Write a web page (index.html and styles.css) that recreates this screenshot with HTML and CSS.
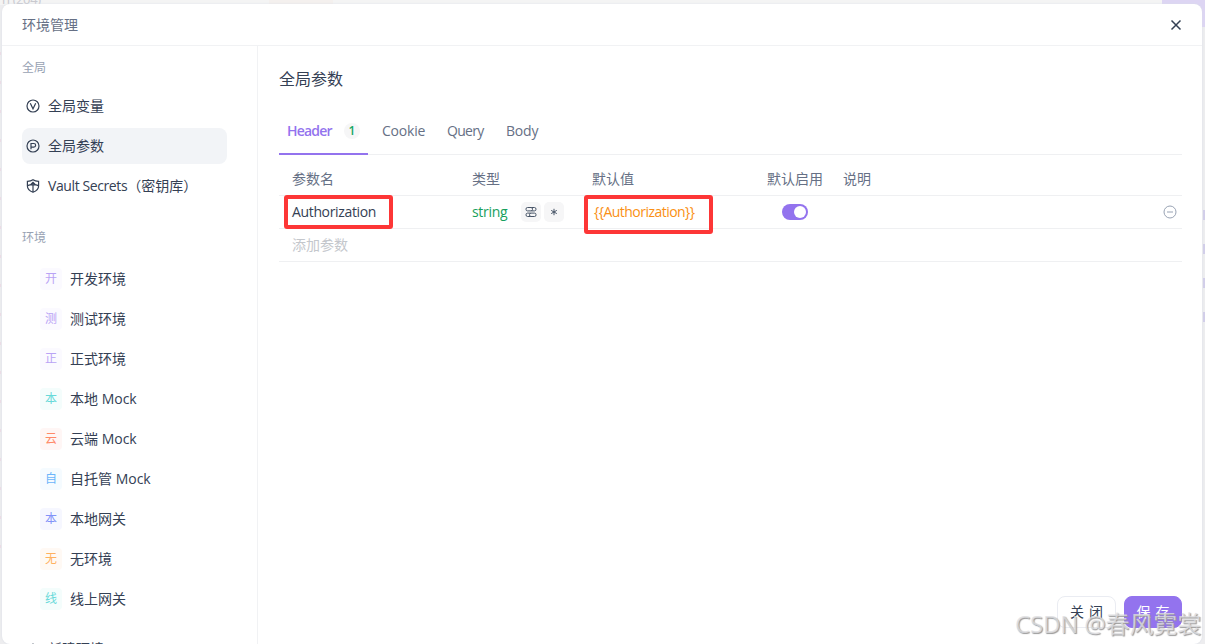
FILE: index.html
```html
<!DOCTYPE html>
<html lang="zh-CN">
<head>
    <meta charset="UTF-8">
    <meta name="viewport" content="width=device-width, initial-scale=1.0">
    <title>环境管理</title>
    <link rel="stylesheet" href="styles.css">
</head>
<body>
    <!-- dimmed page behind the dialog -->
    <div class="backdrop">
        <span class="bg-count">п (204)</span>
        <span class="bg-tab"></span>
        <span class="bg-button"></span>
        <span class="bg-marks bg-marks-left"></span>
        <span class="bg-marks bg-marks-right"></span>
    </div>

    <div class="dialog">
        <div class="dialog-header">
            <span>环境管理</span>
            <svg class="close" viewBox="0 0 12 12"><path d="M1.5 1.5l9 9M10.5 1.5l-9 9"/></svg>
        </div>
        <div class="dialog-body">
            <div class="sidebar">
                <div class="group-title">全局</div>
                <ul class="menu">
                    <li>
                        <svg class="icon" viewBox="0 0 14 14"><circle cx="7" cy="7" r="6"/><path d="M4.300 4.200L7 9.800l2.700-5.600"/></svg>
                        <span>全局变量</span>
                    </li>
                    <li class="active">
                        <svg class="icon" viewBox="0 0 14 14"><circle cx="7" cy="7" r="6"/><path d="M5 10.200V4.500h2.800a1.800 1.800 0 0 1 0 3.700H5"/></svg>
                        <span>全局参数</span>
                    </li>
                    <li>
                        <svg class="icon" viewBox="0 0 14 14"><path d="M7 .8c1.600 1.100 3.500 1.500 5.600 1.600v4.600c0 3-2.100 5-5.600 6.300-3.500-1.300-5.600-3.300-5.600-6.300V2.400C3.500 2.300 5.400 1.900 7 .8zM7 3.600v9.400M1.500 6.600c1.500-.7 3.200-1 5.500-1s4 .3 5.500 1M4.600 5.600L7 3.400l2.400 2.200"/></svg>
                        <span class="latin">Vault Secrets</span><span>（密钥库）</span>
                    </li>
                </ul>
                <div class="group-title env-title">环境</div>
                <ul class="menu env-menu">
                    <li><span class="badge purple">开</span><span>开发环境</span></li>
                    <li><span class="badge purple">测</span><span>测试环境</span></li>
                    <li><span class="badge purple">正</span><span>正式环境</span></li>
                    <li><span class="badge cyan">本</span><span>本地 Mock</span></li>
                    <li><span class="badge red">云</span><span>云端 Mock</span></li>
                    <li><span class="badge blue">自</span><span>自托管 Mock</span></li>
                    <li><span class="badge indigo">本</span><span>本地网关</span></li>
                    <li><span class="badge orange">无</span><span>无环境</span></li>
                    <li><span class="badge cyan">线</span><span>线上网关</span></li>
                </ul>
                <div class="new-env">
                    <svg class="icon" viewBox="0 0 14 14"><path d="M7 1.500v11M1.500 7h11"/></svg>
                    <span>新建环境</span>
                </div>
            </div>

            <div class="main">
                <h2>全局参数</h2>
                <div class="tabs">
                    <div class="tab active"><span>Header</span><span class="count">1</span></div>
                    <div class="tab cookie">Cookie</div>
                    <div class="tab query">Query</div>
                    <div class="tab">Body</div>
                </div>
                <div class="params">
                    <div class="row head">
                        <span>参数名</span>
                        <span>类型</span>
                        <span>默认值</span>
                        <span>默认启用</span>
                        <span>说明</span>
                    </div>
                    <div class="row">
                        <span class="cell name">Authorization<i class="mark mark-name"></i></span>
                        <span class="cell type">
                            <span class="type-name">string</span>
                            <span class="chip"><svg viewBox="0 0 12 12"><rect x="1" y="1.500" width="6.500" height="3.400" rx="1.500"/><path d="M6.500 1.500h3a1.500 1.700 0 0 1 0 3.400h-3"/><path d="M5.500 7.100h-3a1.500 1.700 0 0 0 0 3.400h3"/><rect x="4.500" y="7.100" width="6.500" height="3.400" rx="1.500"/></svg></span>
                            <span class="chip"><svg viewBox="0 0 12 12"><path d="M6 2.800v6.400M3.200 4.400l5.600 3.200M8.800 4.400L3.200 7.600"/></svg></span>
                        </span>
                        <span class="cell value">{{Authorization}}<i class="mark mark-value"></i></span>
                        <span class="cell enabled"><span class="switch"></span></span>
                        <span class="cell"></span>
                        <svg class="remove" viewBox="0 0 14 14"><circle cx="7" cy="7" r="6"/><path d="M4 7h6"/></svg>
                    </div>
                    <div class="row add"><span>添加参数</span></div>
                </div>
                <div class="footer">
                    <button class="btn">关 闭</button>
                    <button class="btn primary">保 存</button>
                </div>
            </div>
        </div>
    </div>
    <div class="watermark">CSDN @春风霓裳</div>
</body>
</html>
```
FILE: styles.css
```css
* {
    box-sizing: border-box;
}
body {
    margin: 0;
    height: 644px;
    padding: 4px 3px 0 2px;
    position: relative;
    overflow: hidden;
    background: #ededef;
    color: #344054;
    font-family: "Open Sans", "Noto Sans CJK SC", sans-serif;
    font-size: 14px;
    line-height: 20px;
}
ul {
    list-style: none;
    margin: 0;
    padding: 0;
}
svg {
    fill: none;
    stroke: currentColor;
    flex: none;
}

/* page behind */
.backdrop {
    position: absolute;
    inset: 0;
    background: linear-gradient(#f4f4f4 0, #f4f4f4 5px, transparent 5px);
}
.bg-count {
    position: absolute;
    left: 2px;
    top: -9px;
    font-size: 13px;
    line-height: 17px;
    color: #c9c9cf;
    letter-spacing: -0.4px;
}
.bg-tab {
    position: absolute;
    left: 269px;
    top: 0;
    width: 64px;
    height: 5px;
    background: #f4f0ee;
}
.bg-button {
    position: absolute;
    right: 0;
    top: 0;
    width: 43px;
    height: 27px;
    background: #ddd5f3;
}
.bg-marks {
    position: absolute;
    width: 1px;
    background: repeating-linear-gradient(#ecdce5 0, #ecdce5 3px, transparent 3px, transparent 29px);
}
.bg-marks-left {
    left: 0;
    top: 52px;
    height: 500px;
}
.bg-marks-right {
    right: 0;
    top: 210px;
    width: 2px;
    height: 112px;
    background: repeating-linear-gradient(#d2cee9 0, #d2cee9 10px, transparent 10px, transparent 34px);
}

.dialog {
    position: relative;
    display: flex;
    flex-direction: column;
    height: 640px;
    background: #fff;
    border-radius: 8px;
    overflow: hidden;
    box-shadow: 0 0 2px #d9dde6;
}
.dialog-header {
    display: flex;
    align-items: center;
    justify-content: space-between;
    flex: none;
    height: 42px;
    padding: 0 20px;
    border-bottom: 1px solid #f1f2f4;
    color: #667085;
}
.close {
    width: 12px;
    height: 12px;
    color: #344054;
    stroke-width: 1.5;
}
.dialog-body {
    display: flex;
    flex: 1;
    min-height: 0;
}

/* sidebar */
.sidebar {
    flex: none;
    width: 256px;
    padding: 12px 30px 0 20px;
    border-right: 1px solid #f1f2f4;
    overflow: hidden;
}
.group-title {
    height: 30px;
    font-size: 12px;
    color: #98a2b3;
}
.menu li {
    display: flex;
    align-items: center;
    height: 36px;
    margin-bottom: 4px;
    padding-left: 4px;
    border-radius: 8px;
    white-space: nowrap;
}
.menu li.active {
    background: #f2f4f7;
}
.icon {
    width: 14px;
    height: 14px;
    margin-right: 8px;
    stroke-width: 1.2;
}
.latin {
    letter-spacing: -0.4px;
}
.env-title {
    margin-top: 24px;
    height: 33px;
}
.env-menu li {
    padding-left: 18px;
}
.badge {
    width: 22px;
    height: 22px;
    margin-right: 8px;
    border-radius: 4px;
    font-size: 12px;
    line-height: 22px;
    text-align: center;
}
.purple { color: #b9a3f5; background: #fbfaff; }
.cyan { color: #67d9d9; background: #f4fdfc; }
.red { color: #ff8a68; background: #fff6f5; }
.blue { color: #6cb5fa; background: #f5fbff; }
.indigo { color: #8292f8; background: #f6f7ff; }
.orange { color: #ffb15f; background: #fff9f4; }
.new-env {
    display: flex;
    align-items: center;
    height: 36px;
    margin-top: 14px;
    padding-left: 4px;
}

/* content */
.main {
    flex: 1;
    display: flex;
    flex-direction: column;
    padding: 21px 20px 16px 21px;
}
h2 {
    margin: 0;
    font-size: 16px;
    font-weight: normal;
    line-height: 24px;
}
.tabs {
    display: flex;
    height: 48px;
    margin-top: 16px;
    border-bottom: 1px solid #eff0f2;
    color: #667085;
}
.tab {
    height: 48px;
    padding-top: 14px;
    letter-spacing: -0.2px;
}
.tab.active {
    display: flex;
    width: 89px;
    padding-left: 8px;
    margin-right: 14px;
    border-bottom: 2px solid #9373ee;
    color: #9373ee;
    font-weight: 600;
    letter-spacing: -0.8px;
}
.count {
    width: 16px;
    height: 16px;
    margin: 2px 8px 0 auto;
    border-radius: 8px;
    background: #f6f6f7;
    color: #17a765;
    font-size: 12px;
    line-height: 16px;
    text-align: center;
    letter-spacing: 0;
}
.cookie {
    width: 65px;
}
.tab.query {
    width: 59px;
    letter-spacing: -0.7px;
}
.row {
    display: grid;
    grid-template-columns: 180px 120px 175px 76px 1fr auto;
    align-items: center;
    height: 33px;
    padding: 0 5px 0 13px;
    border-bottom: 1px solid #eff0f2;
}
.row.head {
    height: 41px;
    padding-top: 8px;
    color: #667085;
}
.row.add {
    color: #c4c7cc;
}
.cell {
    position: relative;
}
.name {
    letter-spacing: -0.35px;
}
.type {
    display: flex;
    align-items: center;
}
.type-name {
    width: 49px;
    color: #17a05d;
    letter-spacing: -0.3px;
}
.chip {
    display: flex;
    align-items: center;
    justify-content: center;
    width: 20px;
    height: 20px;
    margin-right: 3px;
    border-radius: 5px;
    background: #f6f6f7;
    color: #475467;
}
.chip svg {
    width: 12px;
    height: 12px;
}
.value {
    padding-left: 2px;
    color: #fa9014;
    letter-spacing: -0.53px;
}
.enabled {
    padding-left: 15px;
}
.switch {
    display: flex;
    justify-content: flex-end;
    width: 26px;
    height: 16px;
    padding: 2px;
    border-radius: 8px;
    background: #9373ee;
}
.switch::after {
    content: "";
    width: 12px;
    height: 12px;
    border-radius: 50%;
    background: #fff;
}
.remove {
    width: 14px;
    height: 14px;
    color: #98a2b3;
}
/* highlight frames over the cells */
.mark {
    position: absolute;
    left: -8px;
    top: -7px;
    border: 4px solid #fd3636;
    border-radius: 3px;
}
.mark-name {
    width: 109px;
    height: 34px;
}
.mark-value {
    width: 129px;
    height: 39px;
}
.footer {
    display: flex;
    justify-content: flex-end;
    gap: 8px;
    margin-top: auto;
}
.btn {
    width: 59px;
    height: 32px;
    padding: 0;
    border: 1px solid #eaecf2;
    border-radius: 8px;
    background: #fff;
    color: #344054;
    font: inherit;
    word-spacing: 1.5px;
}
.btn.primary {
    width: 58px;
    border-color: #9373ee;
    background: #9373ee;
    color: #fff;
}
.watermark {
    position: absolute;
    right: 4px;
    bottom: 4px;
    font-size: 24px;
    line-height: 32px;
    letter-spacing: -0.15px;
    white-space: nowrap;
    color: rgba(222, 222, 225, 0.8);
    text-shadow: 1px 1px 1px #999;
}
```
